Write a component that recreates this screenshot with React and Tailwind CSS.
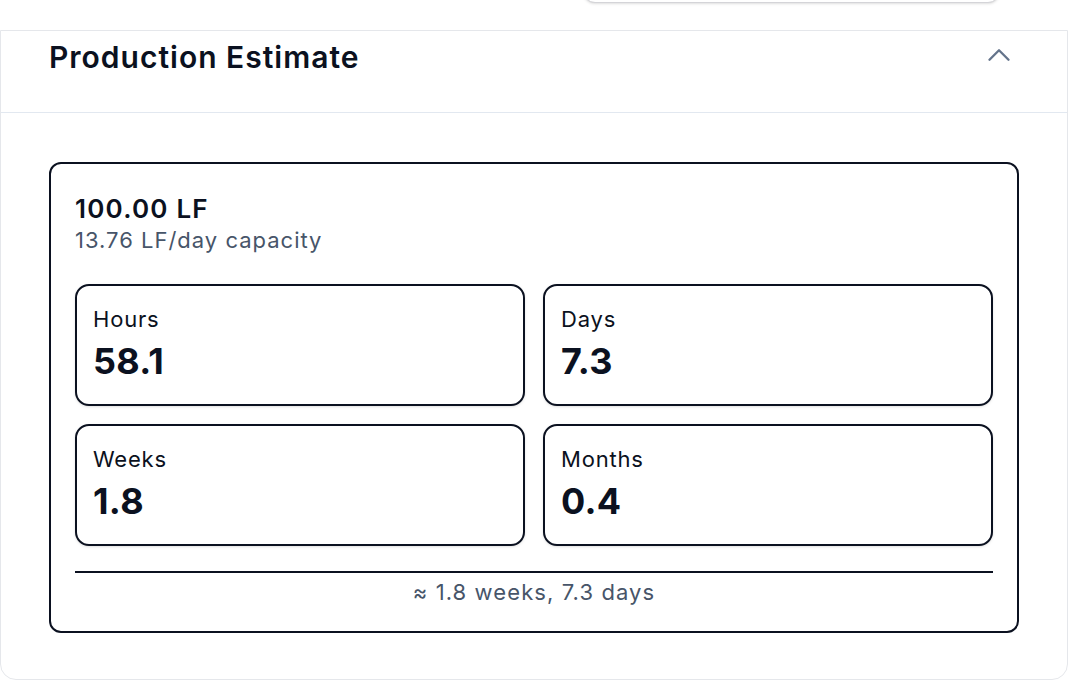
import { ChevronUp } from 'lucide-react';

const stats = [
  { label: 'Hours', value: '58.1' },
  { label: 'Days', value: '7.3' },
  { label: 'Weeks', value: '1.8' },
  { label: 'Months', value: '0.4' },
];

const StatBox = ({ label, value }) => (
  <div className="h-[122px] rounded-[14px] border-2 border-[#0b1120] bg-white px-4 pt-[19px] shadow-sm">
    <div className="text-[22px] leading-[28px] tracking-[0.8px] text-[#0b1120]">{label}</div>
    <div className="mt-[7px] text-[36px] font-bold leading-[42px] tracking-[0.3px] text-[#0b1120]">{value}</div>
  </div>
);

export default function App() {
  return (
    <div className="h-[680px] w-[1068px] overflow-hidden bg-white font-['Inter',sans-serif]">
      {/* bottom edge of the control above */}
      <div className="flex h-[30px] justify-end pr-[68px]">
        <div className="-mt-[20px] h-[23px] w-[417px] rounded-b-xl border border-[#d4d4d8] bg-white shadow-sm"></div>
      </div>

      <div className="h-[650px] rounded-b-2xl border border-[#e5e7eb] bg-white">
        {/* Header */}
        <div className="flex items-start justify-between border-b border-[#e2e8f0] px-12 pb-[36px] pt-[7px]">
          <h2 className="text-[30px] font-semibold leading-[38px] tracking-[1px] text-[#0b1120]">Production Estimate</h2>
          <ChevronUp className="-mt-[2px] mr-[1px] h-[38px] w-[38px] text-[#64748b]" strokeWidth={1.5} />
        </div>

        {/* Body */}
        <div className="px-12 pt-[49px]">
          <div className="rounded-[12px] border-2 border-[#0b1120] px-6 pb-[24px] pt-[29px]">
            <div className="text-[26px] font-semibold leading-[32px] tracking-[1.2px] text-[#0b1120]">100.00 LF</div>
            <div className="mt-[1px] text-[22px] leading-[28px] tracking-[1px] text-[#475569]">13.76 LF/day capacity</div>

            <div className="mt-[30px] grid grid-cols-2 gap-[18px]">
              {stats.map((s) => (
                <StatBox key={s.label} {...s} />
              ))}
            </div>

            <div className="mt-[25px] border-t-2 border-[#0b1120] pt-[4px] text-center text-[22px] leading-[30px] tracking-[1.1px] text-[#475569]">
              ≈ 1.8 weeks, 7.3 days
            </div>
          </div>
        </div>
      </div>
    </div>
  );
}
